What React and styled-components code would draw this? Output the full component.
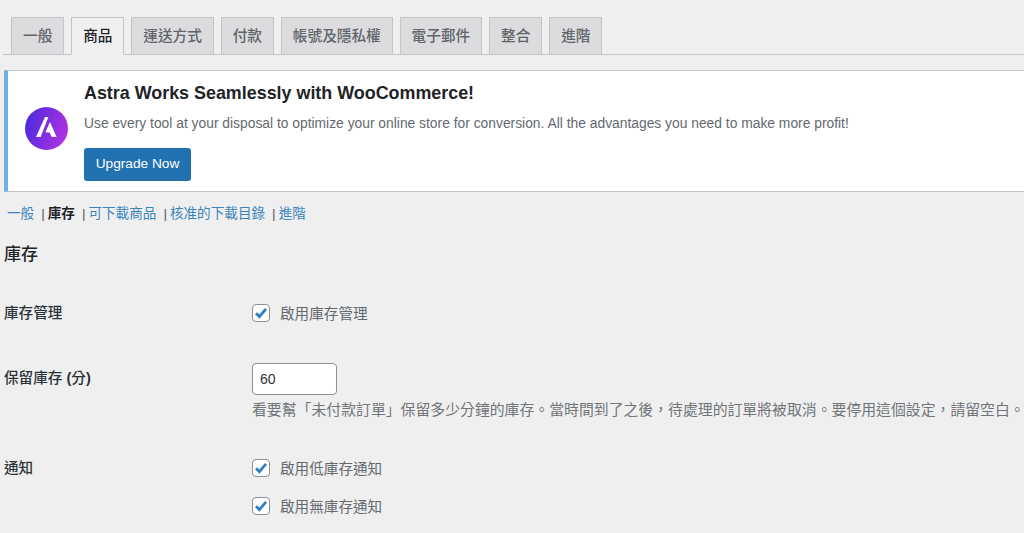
import React from "react";
import styled, { createGlobalStyle } from "styled-components";

const GlobalStyle = createGlobalStyle`
  html, body {
    margin: 0;
    padding: 0;
    background: #efefef;
    overflow: hidden;
  }
  body {
    width: 1024px;
    height: 533px;
    font-family: "Liberation Sans", "Noto Sans CJK TC", sans-serif;
    color: #3c434a;
  }
`;

const Page = styled.div`
  width: 1024px;
  height: 533px;
  overflow: hidden;
  padding-left: 4px;
  box-sizing: border-box;
`;

const TabBar = styled.nav`
  display: flex;
  gap: 6.8px;
  height: 55px;
  box-sizing: border-box;
  padding: 17px 0 0 8px;
  border-bottom: 1px solid #c3c4c7;
  margin-left: -1px;
`;

const Tab = styled.a`
  height: 38px;
  box-sizing: border-box;
  padding: 0 11px 3px;
  display: flex;
  align-items: center;
  font-size: 14.67px;
  font-weight: 500;
  border: 1px solid #c3c4c7;
  border-bottom-color: ${(p) => (p.$active ? "#efefef" : "#c3c4c7")};
  background: ${(p) => (p.$active ? "#f0f0f1" : "#dcdcde")};
  color: ${(p) => (p.$active ? "#1d2327" : "#5f656b")};
`;

const Notice = styled.section`
  margin-top: 15px;
  height: 122px;
  box-sizing: border-box;
  width: 1040px;
  display: flex;
  align-items: flex-start;
  background: #fff;
  border: 1px solid #c3c4c7;
  border-left: 4px solid #72aee6;
  padding-left: 17px;
`;

const LogoWrap = styled.div`
  width: 43px;
  height: 43px;
  flex: none;
  margin: 36px 16px 0 0;
`;

const NoticeBody = styled.div`
  display: flex;
  flex-direction: column;
  align-items: flex-start;
  padding-top: 11px;
`;

const NoticeTitle = styled.h2`
  margin: 0;
  font-size: 17.9px;
  line-height: 22px;
  font-weight: 700;
  color: #1d2327;
`;

const NoticeText = styled.p`
  margin: 9px 0 0;
  font-size: 13.84px;
  line-height: 20px;
  color: #646970;
`;

const UpgradeButton = styled.a`
  margin-top: 15px;
  height: 33px;
  width: 107px;
  box-sizing: border-box;
  padding-bottom: 2px;
  display: flex;
  align-items: center;
  justify-content: center;
  background: #2271b1;
  color: #fff;
  border-radius: 3px;
  font-size: 13.7px;
`;

const SubNav = styled.ul`
  list-style: none;
  margin: 11px 0 0;
  padding: 0 0 0 3px;
  display: flex;
  height: 17px;
  align-items: center;
  font-size: 13.6px;
`;

const SubItem = styled.li`
  white-space: pre;
  color: ${(p) => (p.$active ? "#1d2327" : "#3a84bd")};
  font-weight: ${(p) => (p.$active ? 600 : 400)};
`;

const Divider = styled.span`
  color: #50575e;
  font-weight: 400;
  margin: 0 3px 0 7px;
`;

const SectionTitle = styled.h2`
  margin: 23px 0 0;
  font-size: 17px;
  line-height: 24px;
  font-weight: 500;
  color: #1d2327;
`;

const SettingsForm = styled.div`
  display: grid;
  grid-template-columns: 248px 1fr;
  margin-top: 36px;
`;

const RowLabel = styled.div`
  font-size: 14.6px;
  font-weight: 500;
  line-height: 20px;
  color: #2c3338;
  padding-top: ${(p) => p.$top || 0}px;
`;

const Paren = styled.b`
  font-weight: 700;
`;

const RowField = styled.div`
  display: flex;
  flex-direction: column;
  align-items: flex-start;
  margin-bottom: ${(p) => p.$gap || 0}px;
`;

const CheckRow = styled.label`
  display: flex;
  align-items: center;
  gap: 10px;
  height: 20px;
  font-size: 14.6px;
  color: #646970;
  & + & {
    margin-top: 18px;
  }
`;

const CheckText = styled.span`
  padding-bottom: 2px;
`;

const CheckBox = styled.span`
  width: 18px;
  height: 18px;
  box-sizing: border-box;
  background: #fff;
  border: 1px solid #8c8f94;
  border-radius: 4px;
  display: flex;
  align-items: center;
  justify-content: center;
`;

const NumberInput = styled.input`
  width: 85px;
  height: 32px;
  box-sizing: border-box;
  border: 1px solid #8c8f94;
  border-radius: 4px;
  padding: 0 7px;
  background: #fff;
  font-family: inherit;
  font-size: 14px;
  color: #2c3338;
  outline: none;
`;

const Hint = styled.p`
  margin: 5px 0 0;
  font-size: 14.87px;
  line-height: 20px;
  white-space: nowrap;
  color: #70757a;
`;

const AstraLogo = () => (
  <svg viewBox="0 0 43 43" width="43" height="43">
    <defs>
      <linearGradient id="astra" x1="0" y1="0.35" x2="1" y2="0.65">
        <stop offset="0" stopColor="#4f2ae0" />
        <stop offset="1" stopColor="#b032e0" />
      </linearGradient>
    </defs>
    <circle cx="21.5" cy="21.5" r="21.5" fill="url(#astra)" />
    <path d="M20 10 H23.4 L15.6 30 H11 Z M25 15 L31.6 30 H26.8 L24.4 25.6 L20.4 25.2 Z" fill="#fff" />
  </svg>
);

const Check = () => (
  <svg viewBox="0 0 16 16" width="16" height="16">
    <path d="M3 8.2 L6.4 11.6 L13 3.8" fill="none" stroke="#2f7fc6" strokeWidth="2.8" />
  </svg>
);

const Checkbox = ({ children }) => (
  <CheckRow>
    <CheckBox>
      <Check />
    </CheckBox>
    <CheckText>{children}</CheckText>
  </CheckRow>
);

const tabs = ["一般", "商品", "運送方式", "付款", "帳號及隱私權", "電子郵件", "整合", "進階"];
const subLinks = ["一般", "庫存", "可下載商品", "核准的下載目錄", "進階"];
const holdHint =
  "看要幫「未付款訂單」保留多少分鐘的庫存。當時間到了之後\uFF0C待處理的訂單將被取消。要停用這個設定\uFF0C請留空白。";

export default function App() {
  return (
    <Page>
      <GlobalStyle />
      <TabBar>
        {tabs.map((t) => (
          <Tab key={t} $active={t === "商品"}>
            {t}
          </Tab>
        ))}
      </TabBar>
      <Notice>
        <LogoWrap>
          <AstraLogo />
        </LogoWrap>
        <NoticeBody>
          <NoticeTitle>Astra Works Seamlessly with WooCommerce!</NoticeTitle>
          <NoticeText>
            Use every tool at your disposal to optimize your online store for conversion. All the advantages you need to make more profit!
          </NoticeText>
          <UpgradeButton>Upgrade Now</UpgradeButton>
        </NoticeBody>
      </Notice>
      <SubNav>
        {subLinks.map((s, i) => (
          <SubItem key={s + i} $active={s === "庫存"}>
            {i > 0 && <Divider>|</Divider>}
            {s}
          </SubItem>
        ))}
      </SubNav>
      <SectionTitle>庫存</SectionTitle>
      <SettingsForm>
        <RowLabel>庫存管理</RowLabel>
        <RowField $gap={40}>
          <Checkbox>啟用庫存管理</Checkbox>
        </RowField>
        <RowLabel $top={5}>
          保留庫存 <Paren>(</Paren>分<Paren>)</Paren>
        </RowLabel>
        <RowField $gap={38}>
          <NumberInput defaultValue="60" />
          <Hint>{holdHint}</Hint>
        </RowField>
        <RowLabel>通知</RowLabel>
        <RowField>
          <Checkbox>啟用低庫存通知</Checkbox>
          <Checkbox>啟用無庫存通知</Checkbox>
        </RowField>
      </SettingsForm>
    </Page>
  );
}
